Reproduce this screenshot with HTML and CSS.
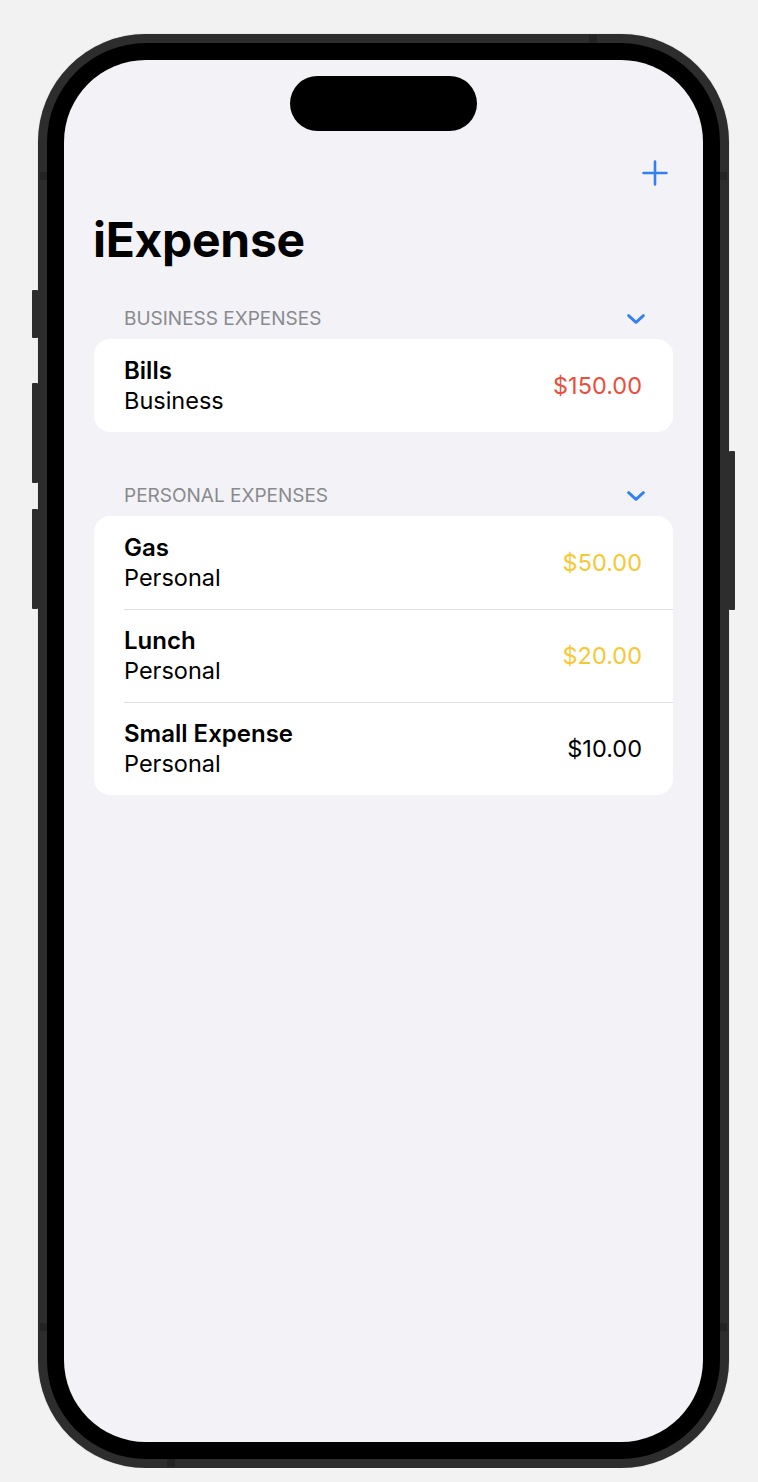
FILE: index.html
```html
<!DOCTYPE html>
<html lang="en">
<head>
  <meta charset="UTF-8">
  <meta name="viewport" content="width=device-width, initial-scale=1.0">
  <title>iExpense</title>
  <link rel="stylesheet" href="styles.css">
</head>

<body>

  <div class="stage">
    <div class="phone">
      <!-- boutons lateraux -->
      <span class="btn btn-action"></span>
      <span class="btn btn-vol-up"></span>
      <span class="btn btn-vol-down"></span>
      <span class="btn btn-power"></span>

      <!-- lignes d'antenne -->
      <span class="band band-lt"></span>
      <span class="band band-rt"></span>
      <span class="band band-top"></span>
      <span class="band band-lb"></span>
      <span class="band band-rb"></span>
      <span class="band band-bottom"></span>

      <div class="bezel">
        <div class="screen">
          <div class="island"></div>

          <div class="toolbar">
            <svg class="plus" width="26" height="26" viewBox="0 0 26 26">
              <path d="M13 1.5 V24.5 M1.5 13 H24.5" fill="none" stroke="#3380f5" stroke-width="2.6" stroke-linecap="round"/>
            </svg>
          </div>

          <h1>iExpense</h1>

          <div class="section section-first">
            <div class="section-header">
              <span>BUSINESS EXPENSES</span>
              <svg width="18" height="10" viewBox="0 0 18 10">
                <polyline points="1.6,1.6 9,8.4 16.4,1.6" fill="none" stroke="#3380f5" stroke-width="2.8" stroke-linecap="round" stroke-linejoin="round"/>
              </svg>
            </div>
            <div class="card">
              <div class="row">
                <div class="row-inner">
                  <div class="label">
                    <div class="name">Bills</div>
                    <div class="type">Business</div>
                  </div>
                  <div class="amount red">$150.00</div>
                </div>
              </div>
            </div>
          </div>

          <div class="section">
            <div class="section-header">
              <span>PERSONAL EXPENSES</span>
              <svg width="18" height="10" viewBox="0 0 18 10">
                <polyline points="1.6,1.6 9,8.4 16.4,1.6" fill="none" stroke="#3380f5" stroke-width="2.8" stroke-linecap="round" stroke-linejoin="round"/>
              </svg>
            </div>
            <div class="card">
              <div class="row">
                <div class="row-inner">
                  <div class="label">
                    <div class="name">Gas</div>
                    <div class="type">Personal</div>
                  </div>
                  <div class="amount yellow">$50.00</div>
                </div>
              </div>
              <div class="row">
                <div class="row-inner">
                  <div class="label">
                    <div class="name">Lunch</div>
                    <div class="type">Personal</div>
                  </div>
                  <div class="amount yellow">$20.00</div>
                </div>
              </div>
              <div class="row">
                <div class="row-inner">
                  <div class="label">
                    <div class="name">Small Expense</div>
                    <div class="type">Personal</div>
                  </div>
                  <div class="amount">$10.00</div>
                </div>
              </div>
            </div>
          </div>

        </div>
      </div>
    </div>
  </div>

</body>
</html>
```

FILE: styles.css
```css
body {
  margin: 0;
  padding: 0;
  background-color: #f2f2f2;
  font-family: 'Inter', 'Liberation Sans', sans-serif;
  color: #000;
}

.stage {
  padding: 34px 0 0 38px;
}

/* cadre du telephone */
.phone {
  position: relative;
  width: 691px;
  height: 1434px;
  box-sizing: border-box;
  padding: 9px;
  background-color: #2d2d2d;
  border-radius: 108px;
  box-shadow: 0 0 1px rgba(0, 0, 0, 0.4);
}
.bezel {
  height: 100%;
  box-sizing: border-box;
  padding: 17px;
  background-color: #000;
  border-radius: 99px;
}
.screen {
  height: 100%;
  background-color: #f2f2f7;
  border-radius: 82px;
  overflow: hidden;
  display: flex;
  flex-direction: column;
}

.btn {
  position: absolute;
  width: 6px;
  background-color: #2d2d2d;
  border-radius: 1px;
}
.btn-action { left: -6px; top: 256px; height: 48px; }
.btn-vol-up { left: -6px; top: 349px; height: 100px; }
.btn-vol-down { left: -6px; top: 475px; height: 100px; }
.btn-power { right: -6px; top: 417px; height: 159px; }

.band {
  position: absolute;
  background-color: #232323;
}
.band-lt { left: 2px; top: 138px; width: 7px; height: 8px; }
.band-rt { right: 2px; top: 138px; width: 7px; height: 8px; }
.band-lb { left: 2px; top: 1289px; width: 7px; height: 8px; }
.band-rb { right: 2px; top: 1289px; width: 7px; height: 8px; }
.band-top { left: 551px; top: 1px; width: 8px; height: 8px; }
.band-bottom { left: 129px; bottom: 1px; width: 8px; height: 8px; }

.island {
  width: 187px;
  height: 55px;
  margin: 16px auto 0;
  background-color: #000;
  border-radius: 28px;
  flex-shrink: 0;
}

.toolbar {
  display: flex;
  justify-content: flex-end;
  margin-top: 29px;
  padding-right: 35px;
}
.plus {
  display: block;
}

h1 {
  margin: 25px 0 0 29px;
  font-size: 48px;
  line-height: 58px;
  font-weight: 700;
  letter-spacing: -0.3px;
}

.section {
  padding: 0 30px;
}
.section-first {
  margin-top: 38px;
}
.section + .section {
  margin-top: 52px;
}
.section-header {
  display: flex;
  justify-content: space-between;
  align-items: center;
  padding: 0 28px 0 30px;
  margin-bottom: 8px;
  font-size: 19px;
  line-height: 24px;
  color: #8a8a8e;
}
.section-header svg {
  display: block;
}

.card {
  background-color: white;
  border-radius: 16px;
  overflow: hidden;
}
.row {
  padding-left: 30px;
}
.row-inner {
  display: flex;
  justify-content: space-between;
  align-items: center;
  padding: 17px 31px 16px 0;
}
.row + .row .row-inner {
  padding-top: 16px;
  border-top: 1px solid #e0e0e4;
}
.name {
  font-size: 24px;
  line-height: 30px;
  font-weight: 600;
}
.type {
  font-size: 23.5px;
  line-height: 30px;
}
.amount {
  font-size: 23.5px;
  line-height: 30px;
}
.red {
  color: #eb4e3d;
}
.yellow {
  color: #f7c833;
}
```
